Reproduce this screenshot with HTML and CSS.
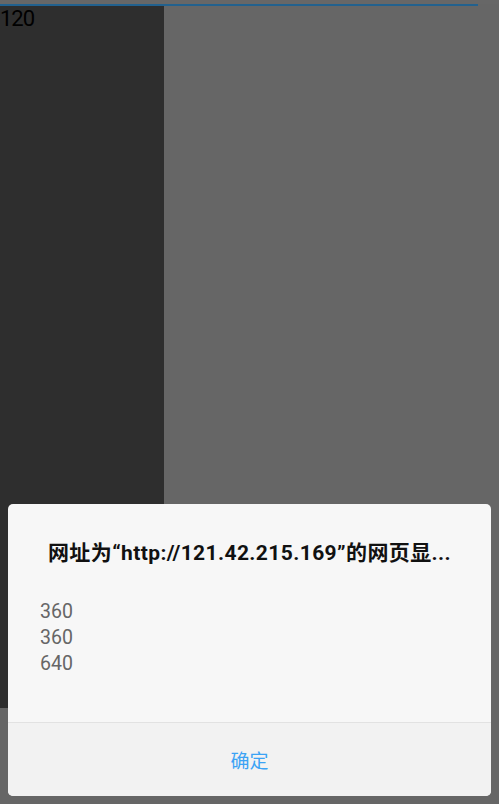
FILE: index.html
```html
<!DOCTYPE html>
<html>
<head>
<meta charset="utf-8">
<link rel="stylesheet" href="styles.css">
</head>
<body>
<div class="page">
  <div class="topbar"><div class="progress"></div></div>
  <div class="content">
    <div class="left"><span class="num">120</span></div>
    <div class="right"></div>
  </div>
</div>
<div class="dialog">
  <div class="title">网址为“http://121.42.215.169”的网页显...</div>
  <div class="body">
    <div>360</div>
    <div>360</div>
    <div>640</div>
  </div>
  <div class="actions"><span class="ok">确定</span></div>
</div>
</body>
</html>
```
FILE: styles.css
```css
html, body {
  margin: 0;
  padding: 0;
  width: 499px;
  height: 804px;
  overflow: hidden;
  background: #666666;
  font-family: Roboto, "Noto Sans CJK SC", sans-serif;
}
.page {
  display: flex;
  flex-direction: column;
  height: 804px;
}
.topbar {
  height: 4px;
  background: #676767;
  border-bottom: 2px solid #666;
  position: relative;
}
.progress {
  position: absolute;
  left: 0;
  top: 4px;
  width: 478px;
  height: 2px;
  background: #22618e;
}
.content {
  display: flex;
  height: 702px;
}
.left {
  width: 164px;
  background: #2e2e2e;
}
.num {
  display: block;
  font-size: 22px;
  line-height: 26px;
  color: #000;
  margin-top: 0;
  letter-spacing: -1px;
}
.right {
  flex: 1;
  background: #666666;
}
.dialog {
  position: absolute;
  left: 8px;
  top: 504px;
  width: 483px;
  height: 292px;
  background: #f7f7f7;
  border-radius: 5px;
  overflow: hidden;
  display: flex;
  flex-direction: column;
}
.title {
  padding-top: 35px;
  height: 28px;
  line-height: 28px;
  text-align: center;
  font-size: 21px;
  font-weight: bold;
  letter-spacing: 0.4px;
  color: #111;
  font-family: Roboto, "Noto Sans CJK SC", sans-serif;
}
.body {
  padding: 32px 0 0 32px;
  font-size: 19.5px;
  line-height: 26px;
  color: #666;
  flex: 1;
}
.actions {
  height: 73px;
  border-top: 1px solid #e2e2e2;
  background: #f2f2f2;
  display: flex;
  align-items: center;
  justify-content: center;
}
.ok {
  font-size: 19px;
  color: #3ba3f5;
}
```
